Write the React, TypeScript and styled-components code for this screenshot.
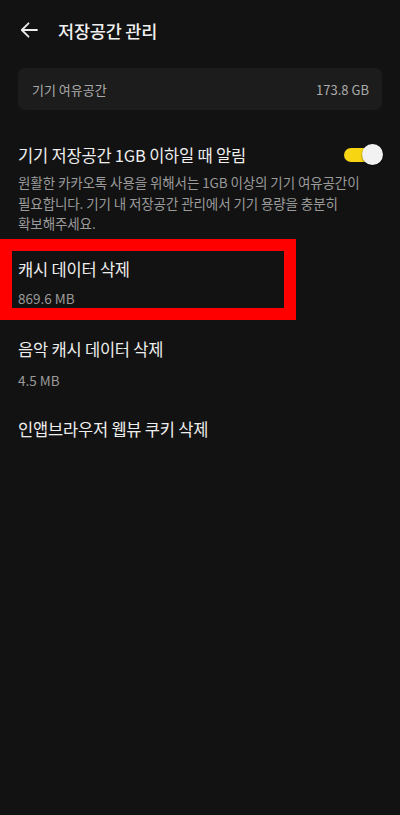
import React from "react";
import styled, { createGlobalStyle } from "styled-components";

const Global = createGlobalStyle`
  html, body { margin: 0; padding: 0; background: #121212; }
  body { font-family: "Noto Sans CJK KR", "Noto Sans", Roboto, sans-serif; }
  * { box-sizing: border-box; }
`;

const Page = styled.div`
  width: 400px;
  min-height: 815px;
  background: #121212;
  color: #ededed;
  display: flex;
  flex-direction: column;
`;

const Header = styled.header`
  height: 60px;
  display: flex;
  align-items: center;
  padding-left: 19px;
  gap: 19px;
`;

const BackButton = styled.button`
  background: none;
  border: none;
  padding: 0;
  width: 20px;
  height: 20px;
  display: flex;
  align-items: center;
  justify-content: center;
  color: #eeeeee;
`;

const Title = styled.h1`
  margin: 0;
  font-size: 17.5px;
  font-weight: 500;
  color: #f0f0f0;
  letter-spacing: -0.2px;
`;

const InfoCard = styled.div`
  margin: 8px 18px 0;
  height: 42px;
  border-radius: 7px;
  background: #1c1c1c;
  display: flex;
  align-items: center;
  justify-content: space-between;
  padding: 0 13px 0 14px;
  font-size: 13px;
  color: #aaaaaa;
`;

const Section = styled.div`
  padding: 0 18px;
  display: flex;
  flex-direction: column;
`;

const ToggleSection = styled(Section)`
  margin-top: 33px;
`;

const ToggleRow = styled.div`
  display: flex;
  align-items: center;
  justify-content: space-between;
  height: 24px;
`;

const ItemTitle = styled.div`
  font-size: 16.5px;
  font-weight: 400;
  color: #eeeeee;
  line-height: 24px;
  letter-spacing: -0.2px;
`;

const Description = styled.p`
  margin: 5px 0 0;
  font-size: 13.5px;
  line-height: 20.5px;
  color: #9b9b9b;
  letter-spacing: -0.1px;
`;

const Switch = styled.div`
  position: relative;
  width: 39px;
  height: 22px;
  margin-right: -1px;
`;

const Track = styled.div`
  position: absolute;
  left: 0;
  top: 4px;
  width: 30px;
  height: 14px;
  border-radius: 7px;
  background: #f7d513;
`;

const Knob = styled.div`
  position: absolute;
  right: 0;
  top: 0;
  width: 21px;
  height: 21px;
  border-radius: 50%;
  background: #f2f2f2;
  box-shadow: 0 1px 2px rgba(0, 0, 0, 0.5);
`;

const ListItem = styled.div<{ $top: number }>`
  position: relative;
  margin-top: ${(p) => p.$top}px;
  padding: 0 18px;
  display: flex;
  flex-direction: column;
`;

const SubValue = styled.div<{ $gap?: number }>`
  font-size: 13.5px;
  line-height: 20px;
  color: #9b9b9b;
  margin-top: ${(p) => p.$gap ?? 7}px;
`;

const Highlight = styled.div`
  position: absolute;
  left: 0;
  top: -18px;
  width: 296px;
  height: 81px;
  border: 12px solid #ff0000;
  pointer-events: none;
`;

export default function App() {
  return (
    <Page>
      <Global />
      <Header>
        <BackButton aria-label="뒤로">
          <svg width="20" height="20" viewBox="0 0 20 20" fill="none">
            <path
              d="M18 10H3M9.5 3.3L2.8 10l6.7 6.7"
              stroke="#ececec"
              strokeWidth="1.8"
              strokeLinecap="round"
              strokeLinejoin="round"
            />
          </svg>
        </BackButton>
        <Title>저장공간 관리</Title>
      </Header>

      <InfoCard>
        <span>기기 여유공간</span>
        <span>173.8 GB</span>
      </InfoCard>

      <ToggleSection>
        <ToggleRow>
          <ItemTitle>기기 저장공간 1GB 이하일 때 알림</ItemTitle>
          <Switch>
            <Track />
            <Knob />
          </Switch>
        </ToggleRow>
        <Description>
          원활한 카카오톡 사용을 위해서는 1GB 이상의 기기 여유공간이
          <br />
          필요합니다. 기기 내 저장공간 관리에서 기기 용량을 충분히
          <br />
          확보해주세요.
        </Description>
      </ToggleSection>

      <ListItem $top={23}>
        <Highlight />
        <ItemTitle>캐시 데이터 삭제</ItemTitle>
        <SubValue>869.6 MB</SubValue>
      </ListItem>

      <ListItem $top={29}>
        <ItemTitle>음악 캐시 데이터 삭제</ItemTitle>
        <SubValue $gap={9}>4.5 MB</SubValue>
      </ListItem>

      <ListItem $top={27}>
        <ItemTitle>인앱브라우저 웹뷰 쿠키 삭제</ItemTitle>
      </ListItem>
    </Page>
  );
}
